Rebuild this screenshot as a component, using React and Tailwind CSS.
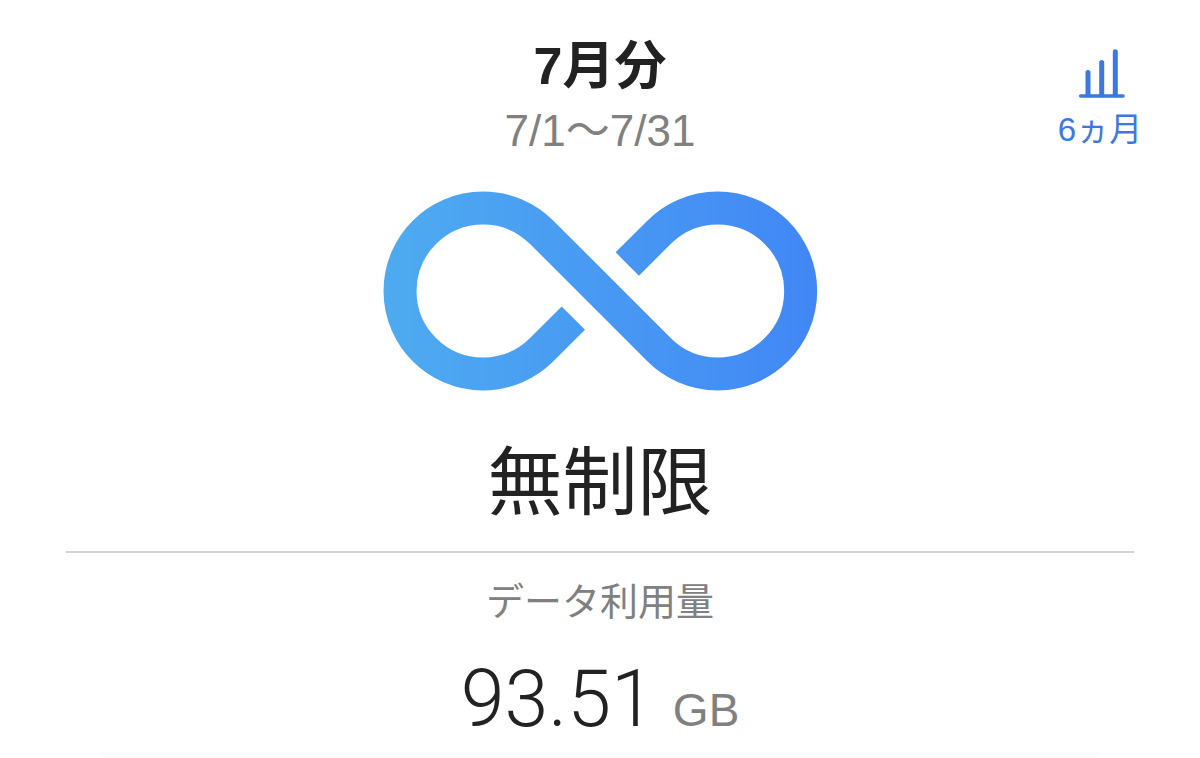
const CJK = "font-['Noto_Sans_CJK_JP','Noto_Sans',sans-serif]";

const BarsIcon = () => (
  <svg width="52" height="50" viewBox="0 0 52 50" fill="none" stroke="#3b78e0" strokeLinecap="round">
    <path d="M14 24.5V47M27.7 14.5V47M41.3 3.8V47" strokeWidth="5" />
    <path d="M6.7 48H49" strokeWidth="3.6" />
  </svg>
);

const InfinityLogo = () => (
  <svg width="436" height="200" viewBox="382 191.5 436 200" fill="none">
    <defs>
      <linearGradient id="inf" gradientUnits="userSpaceOnUse" x1="384" y1="0" x2="817" y2="0">
        <stop offset="0" stopColor="#4eabf0" />
        <stop offset="1" stopColor="#4187f5" />
      </linearGradient>
    </defs>
    <path
      d="M573.3 318.6L541.7 350.2A83 83 0 1 1 541.7 232.8L659 350.2A83 83 0 1 0 659 232.8L627.3 264.5"
      stroke="url(#inf)"
      strokeWidth="33"
    />
  </svg>
);

export default function App() {
  return (
    <div className={`w-[1200px] h-[758px] overflow-hidden bg-white flex flex-col ${CJK}`}>
      <div className="grid grid-cols-[1fr_auto_1fr] pt-[36px] px-[58px]">
        <div />
        <div className="flex flex-col items-center">
          <h1 className="text-[52px] leading-[60px] font-bold text-[#222222] font-['Liberation_Sans','Noto_Sans_CJK_JP',sans-serif]">7月分</h1>
          <p className="mt-[9px] text-[44px] leading-[52px] text-[#808080] font-['Liberation_Sans','Noto_Sans_CJK_JP',sans-serif]">7/1〜7/31</p>
        </div>
        <div className="flex flex-col items-end">
          <div className="flex flex-col items-center w-[84px] mt-[12px] text-[#3b78e0]">
            <BarsIcon />
            <span className="mt-[11px] text-[33px] leading-[42px] whitespace-nowrap font-['Liberation_Sans','Noto_Sans_CJK_JP',sans-serif]">6ヵ月</span>
          </div>
        </div>
      </div>

      <div className="flex justify-center mt-[34px]">
        <InfinityLogo />
      </div>

      <div className="mt-[36px] text-center text-[75px] leading-[100px] text-[#222222]">無制限</div>

      <div className="mx-[66px] mt-[24px] h-[2px] bg-[#d4d4d4]" />

      <div className="mt-[18px] text-center text-[38px] leading-[56px] text-[#808080]">データ利用量</div>

      <div className="mt-[30px] flex justify-center items-baseline gap-[18px] leading-[84px]">
        <span className="text-[79px] font-light text-[#222222] font-['Roboto',sans-serif]">93.51</span>
        <span className="text-[46px] text-[#808080] font-['Liberation_Sans',sans-serif]">GB</span>
      </div>

      <div className="mx-[100px] flex-1 bg-[#fcfcfc]" />
    </div>
  );
}
